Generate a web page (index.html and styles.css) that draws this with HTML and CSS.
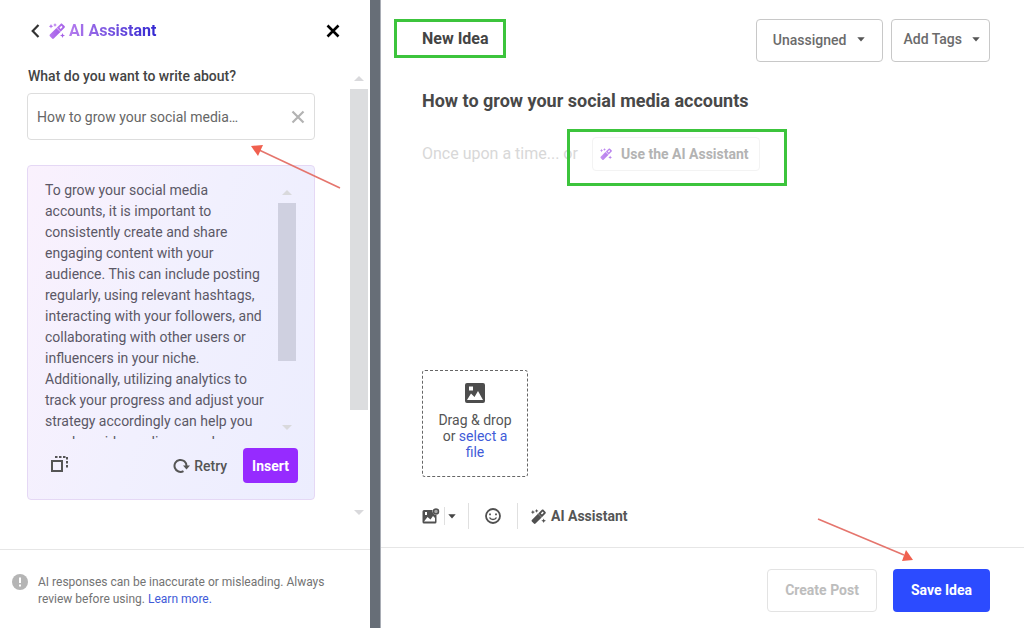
FILE: index.html
```html
<!DOCTYPE html>
<html lang="en">
<head>
<meta charset="utf-8">
<meta name="viewport" content="width=device-width, initial-scale=1">
<title>New Idea</title>
<link rel="stylesheet" href="styles.css">
</head>
<body>
<svg class="defs" aria-hidden="true">
  <defs>
    <linearGradient id="violet" x1="0" y1="0" x2="1" y2="0"><stop offset="0" stop-color="#b878f0"/><stop offset="1" stop-color="#a35fe6"/></linearGradient>
    <symbol id="wand" viewBox="0 0 16 16">
      <path d="M.9 11.600 7.200 5.300l3.900 3.900-6.300 6.300c-.5.5-1.200.5-1.700 0L.9 13.300c-.5-.5-.5-1.200 0-1.700z"/>
      <path fill-rule="evenodd" d="M7.700 4.800 11.600.9c.5-.5 1.200-.5 1.700 0l2.200 2.200c.5.5.5 1.200 0 1.700l-3.900 3.900zM10.500 4.700l1.200 1.200 1.900-1.900-1.200-1.200z"/>
      <path d="M7.400 4.900l4 4-.5.5-4-4z"/>
      <path d="M6 0l.6 1.400L8 2l-1.400.6L6 4l-.6-1.400L4 2l1.400-.6zM2 1l.7 1.600 1.600.7-1.600.7L2 5.600 1.300 4l-1.600-.7 1.600-.7zM13.500 10l.7 1.800 1.800.7-1.800.7-.7 1.800-.7-1.800-1.800-.7 1.800-.7z"/>
    </symbol>
    <symbol id="caret" viewBox="0 0 8 5"><path d="M.3.300h7.400L4 4.500z"/></symbol>
  </defs>
</svg>
<div class="app">
  <aside class="assistant">
    <header class="assistant-head">
      <button class="icon-btn" aria-label="Back"><svg width="10" height="14" viewBox="0 0 10 14"><path d="M8.500 1 2.700 7l5.800 6" fill="none" stroke="#333" stroke-width="2.200"/></svg></button>
      <svg class="wand-violet" width="16" height="16"><use href="#wand"/></svg>
      <h2 class="assistant-title">AI Assistant</h2>
      <button class="icon-btn close" aria-label="Close"><svg width="14" height="14" viewBox="0 0 14 14"><path d="M1.500 1.500l11 11m0-11-11 11" stroke="#000" stroke-width="2.600"/></svg></button>
    </header>
    <div class="assistant-scroll">
      <div class="assistant-body">
        <label class="prompt-label" for="prompt">What do you want to write about?</label>
        <div class="prompt-box">
          <input class="prompt" id="prompt" type="text" value="How to grow your social media…">
          <button class="icon-btn" aria-label="Clear"><svg width="14" height="14" viewBox="0 0 14 14"><path d="M1.500 1.500l11 11m0-11-11 11" stroke="#b3b3b3" stroke-width="2.200"/></svg></button>
          <svg class="arrow arrow-prompt" width="92" height="46" viewBox="0 0 92 46" aria-hidden="true"><path d="M7 5 90 44" stroke="#e5756d" stroke-width="1.600"/><path d="M1 2l12-1-5 11z" fill="#f0604f"/></svg>
        </div>
        <section class="result">
          <div class="result-view">
            <p class="result-text">To grow your social media accounts, it is important to consistently create and share engaging content with your audience. This can include posting regularly, using relevant hashtags, interacting with your followers, and collaborating with other users or influencers in your niche. Additionally, utilizing analytics to track your progress and adjust your strategy accordingly can help you reach a wider audience and</p>
            <div class="bar bar-inner" aria-hidden="true"><i class="tip up"></i><i class="thumb"></i><i class="tip down"></i></div>
          </div>
          <div class="result-actions">
            <button class="icon-btn copy" aria-label="Copy"><svg width="18" height="18" viewBox="0 0 18 18" fill="none" stroke="#555" stroke-width="2"><path d="M2 6h10v10H2z"/><path d="M5 2h12v11" stroke-dasharray="2.500 1.500"/></svg></button>
            <button class="retry"><svg width="17" height="16" viewBox="0 0 17 16"><path d="M10.500 13.100A6 6 0 1 1 13.500 8" fill="none" stroke="#555" stroke-width="2"/><path d="M10 7.500h7l-3.500 4z" fill="#555"/></svg>Retry</button>
            <button class="insert">Insert</button>
          </div>
        </section>
      </div>
      <div class="bar bar-outer" aria-hidden="true"><i class="tip up"></i><i class="thumb"></i><i class="tip down"></i></div>
    </div>
    <footer class="notice">
      <svg width="16" height="16" viewBox="0 0 16 16"><circle cx="8" cy="8" r="8" fill="#b5b5b5"/><path d="M8 3.500v5.500M8 10.500v2" stroke="#fff" stroke-width="2"/></svg>
      <p class="notice-text">AI responses can be inaccurate or misleading. Always review before using. <a class="link" href="#learn">Learn more.</a></p>
    </footer>
  </aside>
  <div class="divider"></div>
  <main class="editor">
    <header class="editor-head">
      <h1 class="editor-title">New Idea</h1>
      <button class="outline assign">Unassigned <svg width="8" height="5" fill="#555"><use href="#caret"/></svg></button>
      <button class="outline tags">Add Tags <svg width="8" height="5" fill="#555"><use href="#caret"/></svg></button>
    </header>
    <div class="editor-body">
      <h2 class="idea-title">How to grow your social media accounts</h2>
      <div class="starter">
        <span class="hint">Once upon a time... or</span>
        <div class="use-wrap"><button class="use"><svg class="wand-violet" width="12" height="12"><use href="#wand"/></svg>Use the AI Assistant</button></div>
      </div>
      <div class="dropzone">
        <svg width="20" height="20" viewBox="0 0 20 20"><path fill-rule="evenodd" fill="#4d4d4d" d="M2 0h16a2 2 0 0 1 2 2v16a2 2 0 0 1-2 2H2a2 2 0 0 1-2-2V2a2 2 0 0 1 2-2zM4 3.500v4h4v-4zM2 17h16l-5-9-3.500 6L6 10.500z"/></svg>
        <span>Drag &amp; drop or <a class="link" href="#file">select a file</a></span>
      </div>
      <div class="toolbar">
        <button class="icon-btn" aria-label="Add image"><svg width="18" height="16" viewBox="0 0 18 16"><path fill="#505050" fill-rule="evenodd" d="M2 2h8.500a4 4 0 0 0 4 5v7a1.500 1.500 0 0 1-1.500 1.500H2A1.500 1.500 0 0 1 .5 14V3.500A1.500 1.500 0 0 1 2 2zM3 4v3h2V4zM2 13.500h11V10l-2-2-2.500 3.500L5.500 9z"/><circle cx="14" cy="3.500" r="2.500" fill="#aaa" stroke="#505050" stroke-width="1.500"/></svg></button>
        <button class="icon-btn more" aria-label="More image options"><svg width="8" height="5" fill="#444"><use href="#caret"/></svg></button>
        <button class="icon-btn emoji" aria-label="Emoji"><svg width="16" height="16" viewBox="0 0 16 16" fill="none" stroke="#505050" stroke-width="1.800"><circle cx="8" cy="8" r="7"/><path d="M4.500 9.500c1.500 2.800 5.500 2.800 7 0" stroke-width="1.500"/><path d="M5 5.500v1.800M11 5.500v1.800"/></svg></button>
        <button class="ai"><svg width="15" height="15" fill="#505050"><use href="#wand"/></svg>AI Assistant</button>
      </div>
    </div>
    <footer class="editor-foot">
      <button class="outline create" disabled>Create Post</button>
      <div class="save-wrap">
        <button class="save">Save Idea</button>
        <svg class="arrow arrow-save" width="98" height="46" viewBox="0 0 98 46" aria-hidden="true"><path d="M2 2 88 38" stroke="#e5756d" stroke-width="1.600"/><path d="M97 43 90 33l-4 11z" fill="#f0604f"/></svg>
      </div>
    </footer>
  </main>
</div>
</body>
</html>
```
FILE: styles.css
```css
* { box-sizing: border-box; }
body { margin: 0; background: #fff; color: #555; font: 14px/20px Roboto, "Liberation Sans", sans-serif; }
h1, h2, p { margin: 0; }
button { padding: 0; border: 0; background: none; color: inherit; font: inherit; font-weight: 500; cursor: pointer; }
svg { display: block; flex: none; }
.defs { position: absolute; width: 0; height: 0; }
.link { color: #3f5bd8; text-decoration: none; }
.wand-violet { fill: url(#violet); }
.icon-btn { display: flex; align-items: center; justify-content: center; }

.app { display: grid; grid-template-columns: 370fr 11px 643fr; min-height: 100vh; }
.divider { background: #676e77; border-right: 1px solid #a9adb5; }

.assistant { display: flex; flex-direction: column; min-width: 0; }
.assistant-head { display: flex; align-items: center; padding: 20px 30px 14px; }
.assistant-head .wand-violet { margin: 0 4px 0 9px; }
.assistant-title { flex: 1; font-size: 16px; line-height: 22px; font-weight: 700; }
.assistant-title { color: transparent; background: linear-gradient(90deg, #b57bee, #2a22cf 92px); background-clip: text; -webkit-background-clip: text; }
.assistant-scroll { display: flex; flex: 1; }
.assistant-body { flex: 1; min-width: 0; padding: 10px 35px 49px 27px; }
.prompt-label { display: block; color: #444; font-weight: 500; margin: 0 0 7px 1px; }
.prompt-box { position: relative; display: flex; align-items: center; height: 47px; padding: 0 9px; border: 1px solid #ddd; border-radius: 4px; }
.prompt { flex: 1; min-width: 0; padding: 0; border: 0; outline: 0; background: none; color: #666; font: inherit; }
.arrow { position: absolute; pointer-events: none; fill: none; }
.arrow-prompt { left: 222px; top: 50px; }
.result { margin-top: 25px; padding: 16px; border: 1px solid #e5d8f5; border-radius: 4px; background: linear-gradient(110deg, #faf1fd, #f1f0fe 50%, #ecedfe); }
.result-view { display: flex; height: 257px; overflow: hidden; }
.result-text { flex: 1; min-width: 0; margin-top: -2px; padding: 0 9px 0 1px; line-height: 21px; color: #5b5866; }
.result-actions { display: flex; align-items: center; gap: 16px; padding-top: 9px; }
.copy { margin: 0 auto 4px 6px; }
.retry { display: flex; align-items: center; gap: 4px; }
.insert { height: 35px; padding: 0 9px; border-radius: 4px; background: #962bff; color: #fff; font-weight: 700; }

.bar { display: flex; flex-direction: column; align-items: center; flex: none; width: 18px; }
.thumb { width: 100%; }
.tip { border: 5px solid transparent; }
.up { border-top: 0; border-bottom-color: #d9d9dc; margin-bottom: 8px; }
.down { border-bottom: 0; border-top-color: #d9d9dc; margin-top: auto; }
.bar-inner { padding: 8px 0 9px; margin-right: 2px; }
.bar-inner .thumb { height: 158px; background: #cfd0e0; }
.bar-outer { margin: 20px 2px 0 0; padding-bottom: 34px; }
.bar-outer .thumb { height: 321px; background: #dcdddf; }

.notice { display: flex; gap: 10px; padding: 24px 30px 20px 12px; border-top: 1px solid #e6e6e6; }
.notice-text { font-size: 12px; line-height: 17px; color: #737373; }

.editor { display: flex; flex-direction: column; min-width: 0; }
.editor-head { display: flex; align-items: flex-start; gap: 8px; padding: 19px 34px 0 13px; }
.editor-title { margin-right: auto; padding: 6px 14px 6px 25px; border: 3px solid #3cc43c; font-size: 16px; line-height: 21px; font-weight: 700; color: #444; }
.outline { display: flex; align-items: center; justify-content: space-between; height: 43px; border: 1px solid #c8c8c8; border-radius: 4px; color: #6b6b6b; }
.assign { gap: 11px; padding: 0 17px 2px 16px; }
.tags { gap: 10px; padding: 0 9px 3px 11px; }
.editor-body { display: flex; flex: 1; flex-direction: column; align-items: flex-start; padding: 28px 34px 18px 41px; }
.idea-title { font-size: 18px; line-height: 22px; font-weight: 700; color: #484848; }
.starter { display: flex; align-items: center; margin-top: 17px; }
.hint { width: 170px; margin-right: -25px; padding-bottom: 8px; color: #d8d8d8; font-size: 16px; }
.use-wrap { padding: 5px 24px 12px 22px; border: 3px solid #3cc43c; }
.use { display: flex; align-items: center; gap: 9px; height: 34px; padding: 0 10px 0 7px; border: 1px solid #f3f3f3; border-radius: 4px; color: #b3b3b3; font-weight: 700; }
.use svg { opacity: 0.8; }
.dropzone { display: flex; flex-direction: column; align-items: center; gap: 9px; width: 106px; height: 107px; margin-top: auto; padding: 12px 14px; border: 1px dashed #666; border-radius: 3px; line-height: 16px; text-align: center; }
.toolbar { display: flex; align-items: center; height: 26px; margin-top: 26px; }
.more { justify-content: flex-start; width: 24px; height: 18px; margin-left: 4px; padding-left: 3px; border-left: 1px solid #e0e0e0; }
.emoji, .ai { height: 26px; border-left: 1px solid #e0e0e0; }
.emoji { width: 49px; }
.ai { display: flex; align-items: center; gap: 5px; padding-left: 13px; font-weight: 700; }
.editor-foot { display: flex; justify-content: flex-end; gap: 16px; padding: 21px 34px 16px; border-top: 1px solid #e6e6e6; }
.create { padding: 0 17px 2px; border-color: #e3e3e3; color: #bdbdbd; font-weight: 700; }
.save-wrap { position: relative; }
.save { height: 43px; padding: 0 18px 2px; border-radius: 4px; background: #2c4bff; color: #fff; font-weight: 700; }
.arrow-save { right: 76px; top: -52px; }
```
